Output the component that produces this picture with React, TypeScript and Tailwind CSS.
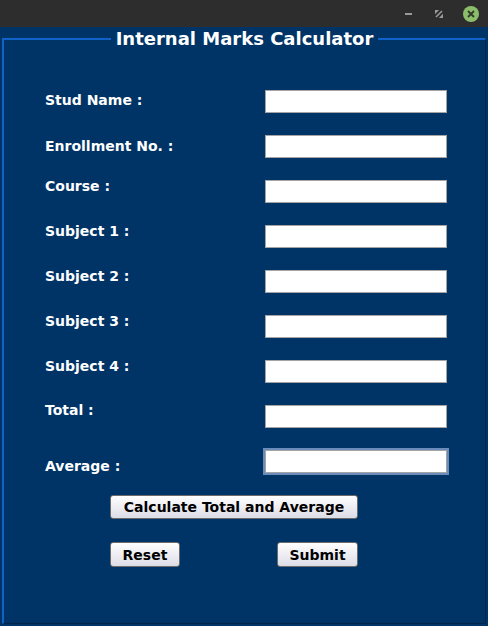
import React from "react";

const font = { fontFamily: '"DejaVu Sans", "Liberation Sans", sans-serif' };

type Row = { label: string; offset: string; focused?: boolean };

const rows: Row[] = [
  { label: "Stud Name :", offset: "mt-[2px]" },
  { label: "Enrollment No. :", offset: "mt-[3px]" },
  { label: "Course :", offset: "-mt-[2px]" },
  { label: "Subject 1 :", offset: "-mt-[2px]" },
  { label: "Subject 2 :", offset: "-mt-[2px]" },
  { label: "Subject 3 :", offset: "-mt-[2px]" },
  { label: "Subject 4 :", offset: "-mt-[2px]" },
  { label: "Total :", offset: "-mt-[3px]" },
  { label: "Average :", offset: "mt-[8px]", focused: true },
];

const btn =
  "h-[24px] rounded-[3px] border border-[#6b6b6b] bg-gradient-to-b from-white to-[#dcdce6] text-[14px] font-bold leading-4 text-black flex items-center justify-center";

export default function App() {
  return (
    <div className="w-[488px] h-[626px] flex flex-col bg-[#003366] overflow-hidden" style={font}>
      {/* title bar */}
      <div className="h-[27px] bg-[#2d2d2d] flex items-center justify-end shrink-0">
        <div className="w-[7px] h-[2px] bg-[#9a9a9a] mr-[23px]" />
        <svg width="8" height="8" viewBox="0 0 8 8" className="mr-[20px]">
          <path d="M0 3 L0 0 L3 0 Z M8 5 L8 8 L5 8 Z M1 7 L7 1" stroke="#9a9a9a" strokeWidth="1.6" fill="#9a9a9a" />
        </svg>
        <div className="w-[16px] h-[16px] rounded-full bg-[#8cbd6b] flex items-center justify-center mr-[9px]">
          <svg width="8" height="8" viewBox="0 0 8 8">
            <path d="M1 1 L7 7 M7 1 L1 7" stroke="#2f3a2a" strokeWidth="1.8" />
          </svg>
        </div>
      </div>

      {/* titled panel */}
      <div className="relative mt-[11px] ml-[2px] w-[484px] h-[586px] border-t-2 border-l-2 border-[#1062c8] border-r border-b border-r-[#00264d] border-b-[#00264d]">
        <div className="absolute -top-[11px] left-0 right-0 flex justify-center">
          <span className="bg-[#003366] px-[5px] text-[18px] font-bold leading-5 text-white">
            Internal Marks Calculator
          </span>
        </div>

        <div className="pt-[50px] pl-[41px] flex flex-col">
          {rows.map((r) => (
            <div key={r.label} className="flex h-[45px] items-start">
              <div className={`w-[220px] text-[14px] font-bold leading-4 text-white ${r.offset}`}>{r.label}</div>
              <div
                className={`w-[182px] h-[23px] bg-white border border-[#a4a4a4] ${
                  r.focused ? "outline-2 outline-[#6a8cbb]" : ""
                }`}
              />
            </div>
          ))}

          <div className="pl-[65px] flex flex-col">
            <button className={`${btn} w-[248px]`}>Calculate Total and Average</button>
            <div className="flex mt-[23px] h-[25px]">
              <button className={`${btn} w-[70px] h-[25px]`}>Reset</button>
              <button className={`${btn} w-[81px] h-[25px] ml-[97px]`}>Submit</button>
            </div>
          </div>
        </div>
      </div>
    </div>
  );
}
